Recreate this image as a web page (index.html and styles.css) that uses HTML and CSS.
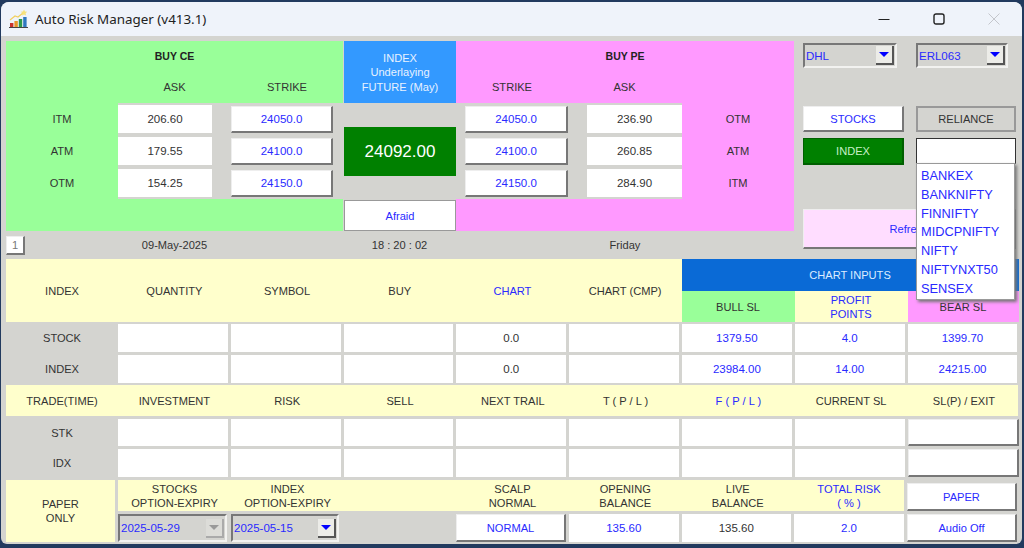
FILE: index.html
```html
<!DOCTYPE html>
<html lang="en">
<head>
    <meta charset="UTF-8">
    <meta name="viewport" content="width=device-width, initial-scale=1.0">
    <title>Auto Risk Manager (v413.1)</title>
    <link rel="stylesheet" href="styles.css">
</head>
<body>
    <div class="window">
        <header class="titlebar">
            <svg class="app-icon" width="20" height="20" viewBox="0 0 20 20">
                <path d="M1 11 L6 7 L9 8 L14 4" fill="none" stroke="#f2d060" stroke-width="1.2"/>
                <path d="M15 0.5l1 2 2.2 0.3-1.6 1.5 0.4 2.2-2-1-2 1 0.4-2.2-1.6-1.5 2.2-0.3z" fill="#f7e27a"/>
                <rect x="1" y="14" width="3.4" height="4" fill="#c8322c"/>
                <rect x="5.4" y="12" width="3.4" height="6" fill="#e8962a"/>
                <rect x="9.8" y="10" width="3.4" height="8" fill="#2f9a4a"/>
                <rect x="14.2" y="8" width="3.4" height="10" fill="#2f78c0"/>
                <rect x="0" y="18" width="19" height="1" fill="#444"/>
            </svg>
            <span class="app-title">Auto Risk Manager (v413.1)</span>
            <div class="win-controls">
                <svg width="12" height="12" viewBox="0 0 12 12"><path d="M0.5 6.5h11" stroke="#222" stroke-width="1"/></svg>
                <svg width="12" height="12" viewBox="0 0 12 12"><rect x="1" y="1" width="10" height="10" rx="2" fill="none" stroke="#222" stroke-width="1.4"/></svg>
                <svg width="12" height="12" viewBox="0 0 12 12"><path d="M0.5 0.5L11.5 11.5M11.5 0.5L0.5 11.5" stroke="#c4c6cc" stroke-width="1"/></svg>
            </div>
        </header>

        <main class="content">
            <section class="top">
                <div class="quotes">
                    <div class="panel panel-ce">
                        <div class="panel-title">BUY CE</div>
                        <div class="ce-heads"><span>ASK</span><span>STRIKE</span></div>
                        <div class="ce-body">
                            <div class="side-labels"><span>ITM</span><span>ATM</span><span>OTM</span></div>
                            <div class="ce-rows">
                                <div class="val">206.60</div><button class="btn blue">24050.0</button>
                                <div class="val">179.55</div><button class="btn blue">24100.0</button>
                                <div class="val">154.25</div><button class="btn blue">24150.0</button>
                            </div>
                        </div>
                    </div>
                    <div class="underlying">
                        <div class="underlying-head">INDEX<br>Underlaying<br>FUTURE (May)</div>
                        <div class="underlying-mid"><div class="ltp">24092.00</div></div>
                        <div class="mood">Afraid</div>
                    </div>
                    <div class="panel panel-pe">
                        <div class="panel-title">BUY PE</div>
                        <div class="pe-heads"><span>STRIKE</span><span>ASK</span></div>
                        <div class="pe-body">
                            <div class="pe-rows">
                                <button class="btn blue">24050.0</button><div class="val">236.90</div>
                                <button class="btn blue">24100.0</button><div class="val">260.85</div>
                                <button class="btn blue">24150.0</button><div class="val">284.90</div>
                            </div>
                            <div class="side-labels"><span>OTM</span><span>ATM</span><span>ITM</span></div>
                        </div>
                    </div>
                </div>
                <div class="date-row">
                    <button class="btn page-btn">1</button>
                    <span class="date">09-May-2025</span>
                    <span class="time">18 : 20 : 02</span>
                    <span class="day">Friday</span>
                </div>

                <aside class="side">
                    <div class="select select-dhl"><span>DHL</span><i class="arrow"></i></div>
                    <div class="select select-erl"><span>ERL063</span><i class="arrow"></i></div>
                    <button class="btn blue side-stocks">STOCKS</button>
                    <div class="reliance">RELIANCE</div>
                    <button class="btn index-btn">INDEX</button>
                    <div class="search"></div>
                    <button class="btn blue refresh">Refresh</button>
                </aside>
                <ul class="dropdown">
                    <li>BANKEX</li>
                    <li>BANKNIFTY</li>
                    <li>FINNIFTY</li>
                    <li>MIDCPNIFTY</li>
                    <li>NIFTY</li>
                    <li>NIFTYNXT50</li>
                    <li>SENSEX</li>
                </ul>
            </section>

            <section class="head-row">
                <div class="grid yellow head-main">
                    <span>INDEX</span><span>QUANTITY</span><span>SYMBOL</span><span>BUY</span>
                    <span class="link">CHART</span><span>CHART (CMP)</span>
                </div>
                <div class="chart-inputs">
                    <div class="chart-title">CHART INPUTS</div>
                    <div class="chart-cols">
                        <span class="bull">BULL SL</span>
                        <span class="profit">PROFIT<br>POINTS</span>
                        <span class="bear">BEAR SL</span>
                    </div>
                </div>
            </section>

            <section class="grid row row-28 gap-3">
                <span>STOCK</span>
                <div class="val"></div><div class="val"></div><div class="val"></div>
                <div class="val">0.0</div><div class="val"></div>
                <div class="val link">1379.50</div><div class="val link">4.0</div><div class="val link">1399.70</div>
            </section>
            <section class="grid row row-28 gap-2">
                <span>INDEX</span>
                <div class="val"></div><div class="val"></div><div class="val"></div>
                <div class="val">0.0</div><div class="val"></div>
                <div class="val link">23984.00</div><div class="val link">14.00</div><div class="val link">24215.00</div>
            </section>

            <section class="grid yellow trade-head gap-3">
                <span>TRADE(TIME)</span><span>INVESTMENT</span><span>RISK</span><span>SELL</span>
                <span>NEXT TRAIL</span><span>T ( P / L )</span><span class="link">F ( P / L )</span>
                <span>CURRENT SL</span><span>SL(P) / EXIT</span>
            </section>

            <section class="grid row row-27 gap-3">
                <span>STK</span>
                <div class="val"></div><div class="val"></div><div class="val"></div><div class="val"></div>
                <div class="val"></div><div class="val"></div><div class="val"></div>
                <button class="btn"></button>
            </section>
            <section class="grid row row-28 gap-3">
                <span>IDX</span>
                <div class="val"></div><div class="val"></div><div class="val"></div><div class="val"></div>
                <div class="val"></div><div class="val"></div><div class="val"></div>
                <button class="btn"></button>
            </section>

            <section class="bottom">
                <div class="paper-only">PAPER<br>ONLY</div>
                <div class="bottom-main">
                    <div class="bottom-heads">
                        <span>STOCKS<br>OPTION-EXPIRY</span><span>INDEX<br>OPTION-EXPIRY</span><span></span>
                        <span>SCALP<br>NORMAL</span><span>OPENING<br>BALANCE</span><span>LIVE<br>BALANCE</span>
                        <span class="link">TOTAL RISK<br>( % )</span>
                    </div>
                    <div class="bottom-vals">
                        <div class="select expiry-first"><span>2025-05-29</span><i class="arrow off"></i></div>
                        <div class="select expiry-second"><span>2025-05-15</span><i class="arrow"></i></div>
                        <div></div>
                        <button class="btn blue">NORMAL</button>
                        <div class="val link">135.60</div>
                        <div class="val">135.60</div>
                        <div class="val link">2.0</div>
                    </div>
                </div>
                <div class="bottom-side">
                    <button class="btn blue">PAPER</button>
                    <button class="btn blue">Audio Off</button>
                </div>
            </section>
        </main>
    </div>
</body>
</html>
```

FILE: styles.css
```css
* {
    box-sizing: border-box;
    margin: 0;
    padding: 0;
}
html, body {
    width: 1024px;
    height: 548px;
    overflow: hidden;
}
body {
    background-color: #223a5e;
    font-family: 'Liberation Sans', Arial, sans-serif;
    font-size: 11.1px;
    color: #333;
}
.window {
    width: 1021px;
    height: 542px;
    margin: 2px 0 0 1px;
    border-radius: 8px 8px 6px 6px;
    overflow: hidden;
    background-color: #d4d4d0;
}
.titlebar {
    height: 34px;
    background-color: #eff3fa;
    display: flex;
    align-items: center;
    padding-left: 8px;
}
.app-icon {
    margin-right: 6px;
}
.app-title {
    font-family: 'Noto Sans', sans-serif;
    font-size: 13.4px;
    color: #222;
}
.win-controls {
    margin-left: auto;
    display: flex;
    gap: 43px;
    padding-right: 22px;
}
.content {
    position: relative;
    padding: 5px 0 0 5px;
}
.top {
    height: 218px;
}
.quotes {
    display: flex;
    height: 190px;
}
button {
    font: inherit;
    cursor: pointer;
}
.btn {
    background-color: #fff;
    color: #333;
    border: none;
    border-top: 1px solid #eee;
    border-left: 1px solid #eee;
    border-right: 2px solid #777;
    border-bottom: 2px solid #777;
}
.blue {
    color: #2a2aff;
}
.link {
    color: #2a2aff;
}
.val {
    background-color: #fff;
    font-size: 11.5px;
    display: flex;
    align-items: center;
    justify-content: center;
}
.panel {
    display: flex;
    flex-direction: column;
}
.panel-ce {
    width: 337px;
    background-color: #99ff99;
}
.panel-pe {
    width: 338px;
    background-color: #ff99ff;
}
.panel-title {
    height: 30px;
    display: flex;
    align-items: center;
    justify-content: center;
    font-size: 10.5px;
    font-weight: bold;
    color: #222;
}
.ce-heads, .pe-heads {
    height: 32px;
    display: grid;
    align-items: center;
    text-align: center;
}
.ce-heads {
    grid-template-columns: 112px 113px 112px;
}
.ce-heads span:first-child {
    grid-column: 2;
}
.pe-heads {
    grid-template-columns: 112px 113px 113px;
}
.ce-body, .pe-body {
    display: flex;
    height: 96px;
}
.side-labels {
    display: grid;
    padding-top: 2px;
    grid-auto-rows: 28px;
    row-gap: 4px;
    align-items: center;
    justify-items: center;
}
.ce-body .side-labels {
    width: 112px;
}
.pe-body .side-labels {
    flex: 1;
}
.ce-rows, .pe-rows {
    background-color: #d4d4d0;
    display: grid;
    padding-top: 2px;
    row-gap: 4px;
    grid-auto-rows: 28px;
    align-items: center;
}
.ce-rows {
    width: 225px;
    grid-template-columns: 94px 102px;
    column-gap: 19px;
}
.pe-rows {
    width: 226px;
    padding-left: 9px;
    grid-template-columns: 103px 95px;
    column-gap: 19px;
}
.ce-rows .val, .pe-rows .val {
    height: 28px;
}
.ce-rows .btn, .pe-rows .btn {
    height: 27px;
    font-size: 11.5px;
}
.underlying {
    width: 113px;
    padding-left: 1px;
    display: flex;
    flex-direction: column;
}
.underlying-head {
    height: 62px;
    background-color: #3399ff;
    color: #e8f2ff;
    text-align: center;
    line-height: 14.4px;
    padding-top: 10px;
}
.underlying-mid {
    height: 97px;
    padding-top: 24px;
}
.ltp {
    height: 49px;
    background-color: #008000;
    color: #fff;
    font-size: 17px;
    display: flex;
    align-items: center;
    justify-content: center;
}
.mood {
    height: 31px;
    background-color: #fff;
    border: 1px solid #999;
    color: #2a2aff;
    display: flex;
    align-items: center;
    justify-content: center;
}
.date-row {
    position: relative;
    height: 28px;
    display: grid;
    grid-template-columns: 337px 113px 338px;
    align-items: center;
    text-align: center;
}
.page-btn {
    position: absolute;
    left: 0;
    top: 5px;
    width: 19px;
    height: 19px;
    color: #777;
}
.side {
    position: absolute;
    left: 802px;
    top: 7px;
    width: 213px;
    display: grid;
    grid-template-columns: 101px 100px;
    column-gap: 12px;
    grid-template-rows: 25px 38px 26px 6px 27px 44px 40px;
}
.select {
    background-color: #d4d4d0;
    color: #2a2aff;
    font-size: 11.5px;
    border-top: 2px solid #777;
    border-left: 2px solid #777;
    border-right: 2px solid #f2f2f0;
    border-bottom: 2px solid #f2f2f0;
    display: flex;
    align-items: center;
    justify-content: space-between;
    padding-left: 1px;
}
.select .arrow {
    width: 18px;
    height: 19px;
    margin-right: 1px;
    background-color: #ecece8;
    border-right: 2px solid #555;
    border-bottom: 2px solid #555;
    position: relative;
}
.select .arrow::after {
    content: "";
    position: absolute;
    left: 3px;
    top: 6px;
    border-left: 5px solid transparent;
    border-right: 5px solid transparent;
    border-top: 5px solid #0000ff;
}
.select .arrow.off {
    background-color: #dcdcd8;
    border-right-color: #aaa;
    border-bottom-color: #aaa;
}
.select .arrow.off::after {
    border-top-color: #999;
}
.select-dhl {
    width: 94px;
    grid-row: 1;
    grid-column: 1;
}
.select-erl {
    width: 92px;
    grid-row: 1;
    grid-column: 2;
}
.side-stocks {
    grid-row: 3;
    grid-column: 1;
}
.reliance {
    grid-row: 3;
    grid-column: 2;
    background-color: #d4d4d0;
    border: 2px solid #999;
    color: #333;
    display: flex;
    align-items: center;
    justify-content: center;
}
.index-btn {
    grid-row: 5;
    grid-column: 1;
    background-color: #008000;
    color: #c8f0c8;
    border-color: #006000;
}
.search {
    grid-row: 5;
    grid-column: 2;
    height: 26px;
    background-color: #fff;
    border: 1px solid #333;
    border-bottom-color: #999;
}
.refresh {
    grid-row: 7;
    grid-column: 1 / 3;
    background-color: #ffddff;
}
.dropdown {
    position: absolute;
    left: 915px;
    top: 127px;
    width: 99px;
    height: 137px;
    background-color: #fff;
    border: 1px solid #999;
    list-style: none;
    padding: 3px 0 0 4px;
    color: #2a2aff;
    font-size: 12.8px;
    line-height: 18.8px;
    box-shadow: 2px 2px 3px #777;
}
.grid {
    display: grid;
    grid-template-columns: 112px repeat(8, 112.8px);
    align-items: center;
    text-align: center;
}
.yellow {
    background-color: #ffffcc;
}
.head-row {
    display: flex;
    height: 63px;
    margin-bottom: 2px;
}
.head-main {
    width: 675.5px;
    grid-template-columns: 112px repeat(5, 112.7px);
}
.chart-inputs {
    width: 337px;
    display: flex;
    flex-direction: column;
}
.chart-title {
    height: 32px;
    background-color: #0a6ad6;
    color: #dcecff;
    display: flex;
    align-items: center;
    justify-content: center;
}
.chart-cols {
    flex: 1;
    display: grid;
    grid-template-columns: 113px 113px 111px;
    text-align: center;
}
.chart-cols span {
    display: flex;
    align-items: center;
    justify-content: center;
    line-height: 14px;
}
.bull {
    background-color: #99ff99;
}
.profit {
    background-color: #ffffcc;
    color: #2a2aff;
}
.bear {
    background-color: #ff99ff;
}
.row {
    align-items: stretch;
}
.row > span {
    align-self: center;
}
.row > .val {
    margin-right: 3px;
}
.row > .btn {
    margin-right: 1px;
}
.row-28 {
    height: 28px;
}
.row-27 {
    height: 27px;
}
.gap-3 {
    margin-bottom: 3px;
}
.gap-2 {
    margin-bottom: 2px;
}
.trade-head {
    height: 31px;
    width: 1012px;
}
.bottom {
    display: flex;
    height: 62px;
}
.paper-only {
    width: 109px;
    margin-right: 3px;
    background-color: #ffffcc;
    text-align: center;
    line-height: 14px;
    display: flex;
    align-items: center;
    justify-content: center;
}
.bottom-main {
    width: 786px;
}
.bottom-heads {
    height: 31px;
    background-color: #ffffcc;
    display: grid;
    grid-template-columns: 113px 113px 112px 113px 112.5px 112.5px 110px;
    text-align: center;
    line-height: 14px;
    align-items: center;
}
.bottom-vals {
    height: 28px;
    margin-top: 3px;
    display: grid;
    grid-template-columns: 113px 113px 112px 113px 112.5px 112.5px 110px;
}
.bottom-vals > .val, .bottom-vals > .btn {
    margin-right: 3px;
}
.bottom-vals > .val:last-child {
    margin-right: 0;
}
.expiry-first {
    margin-right: 4px;
}
.expiry-second {
    margin-right: 5px;
}
.bottom-side {
    width: 113px;
    padding: 3px 0 0 3px;
    display: flex;
    flex-direction: column;
    gap: 3px;
}
.bottom-side .btn {
    height: 28px;
}
```
